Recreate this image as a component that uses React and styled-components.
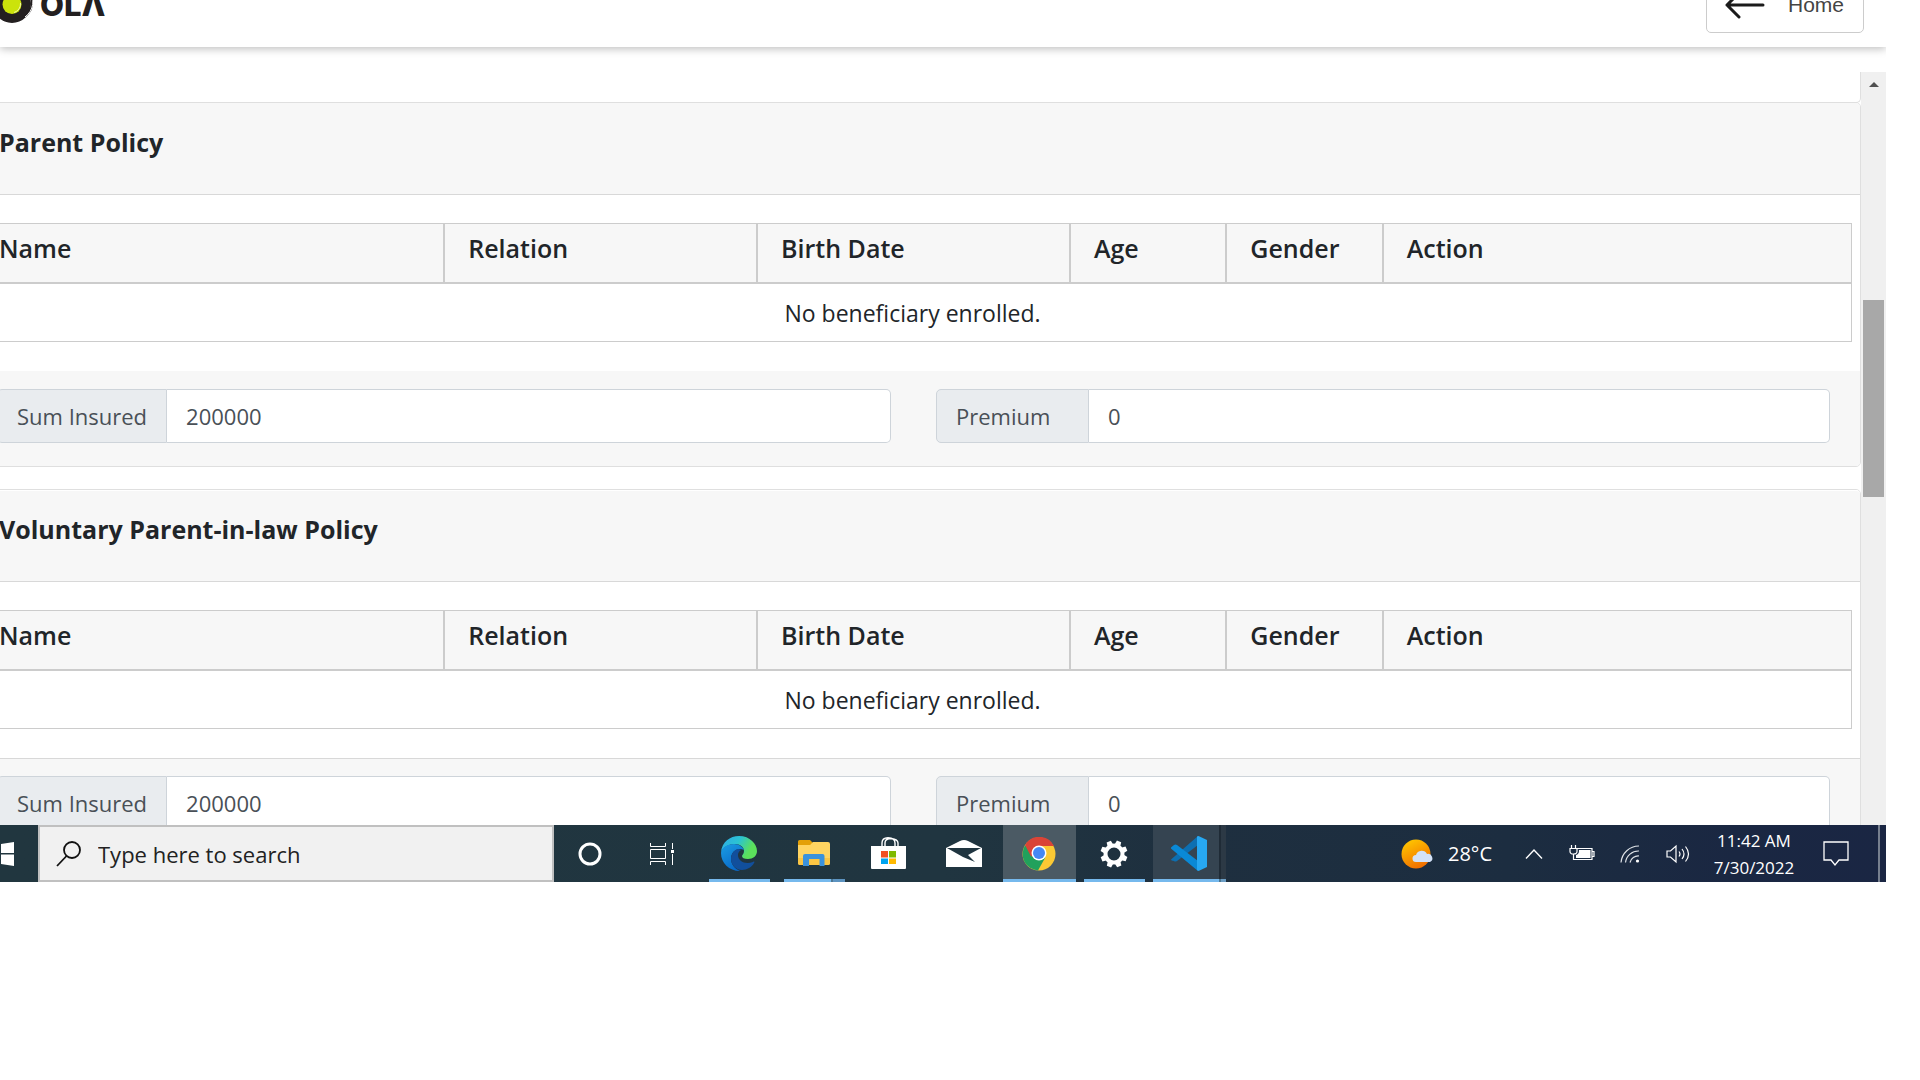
import React from "react";
import styled, { createGlobalStyle, css } from "styled-components";

const GlobalStyle = createGlobalStyle`
  *, *::before, *::after { box-sizing: border-box; }
  body {
    margin: 0;
    background: #fff;
    color: #212529;
    font-family: "Open Sans", "Noto Sans", sans-serif;
    font-size: 22px;
    line-height: 36px;
  }
  button, input { font: inherit; color: inherit; margin: 0; }
`;

const Screen = styled.div`
  display: flex;
  flex-direction: column;
  height: calc(100vh - 198px);
  margin-right: 34px;
  overflow: hidden;
`;

const Header = styled.header`
  display: flex;
  flex: none;
  justify-content: space-between;
  align-items: flex-end;
  height: 47px;
  padding-right: 22px;
  background: #fff;
  box-shadow: 0 2px 8px rgba(0, 0, 0, 0.25);
`;

const Brand = styled.a`
  display: flex;
  align-items: flex-end;
  gap: 6px;
  height: 63px;
  padding-bottom: 23px;
  color: #231f20;
  text-decoration: none;
`;

const BrandName = styled.span`
  font-family: Inter, sans-serif;
  font-size: 31px;
  font-weight: 800;
  line-height: 38px;
`;

const HomeButton = styled.button`
  display: flex;
  flex: none;
  align-items: center;
  gap: 23px;
  height: 56px;
  margin-bottom: 14px;
  padding: 0 19px 0 18px;
  border: 1px solid #ccc;
  border-radius: 5px;
  background: #fff;
  color: #444;
  font-family: "Liberation Sans", Arial, sans-serif;
  font-size: 21px;
`;

const Viewport = styled.div`
  display: flex;
  flex: 1;
  min-height: 0;
  margin-top: 25px;
  overflow: hidden;
`;

const Content = styled.main`
  flex: 1;
  min-width: 0;
  margin-left: -35px;
`;

const Card = styled.section`
  margin-bottom: 22px;
  border: 1px solid #dfdfdf;
  border-radius: 5px;
`;

const PreviousCard = styled.div`
  height: 31px;
  margin-bottom: -1px;
  border: 1px solid #dfdfdf;
  border-top: 0;
  border-radius: 0 0 5px 5px;
`;

const CardHeader = styled.div`
  height: 92px;
  padding: ${(p) => (p.$divided ? "19px" : "20px")} 33px 20px;
  border-top: ${(p) => (p.$divided ? "1px solid #fff" : "0")};
  border-bottom: 1px solid #d8d8d8;
  border-radius: 4px 4px 0 0;
  background: #f7f7f7;
`;

const Title = styled.h2`
  margin: 0;
  font-size: 25px;
  font-weight: 700;
  line-height: 38px;
`;

const CardBody = styled.div`
  padding: 28px 8px 29px;
`;

const Table = styled.table`
  width: 100%;
  table-layout: fixed;
  border-spacing: 0;
  border-right: 1px solid #ccc;
`;

const Th = styled.th`
  width: ${(p) => p.$share}%;
  height: 61px;
  padding: 6px 23px 16px;
  border: solid #ccc;
  border-width: 1px 0 2px 2px;
  background: #f7f7f7;
  font-size: 25px;
  font-weight: 600;
  text-align: left;
  vertical-align: top;
`;

const Td = styled.td`
  height: 58px;
  padding: 10px 23px;
  border-bottom: 1px solid #ccc;
  font-size: 23px;
  text-align: center;
`;

const CardFooter = styled.div`
  display: grid;
  grid-template-columns: 1fr 1fr;
  gap: 45px;
  padding: 17px 30px 23px 31px;
  border-top: 1px solid ${(p) => (p.$divided ? "#d8d8d8" : "#f7f7f7")};
  border-radius: 0 0 4px 4px;
  background: #f7f7f7;
  color: #495057;
`;

const Field = styled.div`
  display: flex;
  height: 54px;
`;

const FieldLabel = styled.label`
  flex: none;
  min-width: 153px;
  padding: 8px 19px;
  border: 1px solid #ced4da;
  border-radius: 5px 0 0 5px;
  background: #e9ecef;
`;

const FieldInput = styled.input`
  flex: 1;
  min-width: 0;
  padding: 0 19px;
  border: 1px solid #ced4da;
  border-left: 0;
  border-radius: 0 5px 5px 0;
  background: #fff;
  outline: none;
`;

const ScrollTrack = styled.div`
  display: flex;
  flex: none;
  flex-direction: column;
  align-items: center;
  width: 25px;
  background: #f0f0f0;
`;

const ScrollArrow = styled.svg`
  width: 10px;
  height: 5px;
  margin: 10px 0 213px;
`;

const ScrollThumb = styled.div`
  width: 21px;
  height: 197px;
  background: #a8a8a8;
`;

const Taskbar = styled.footer`
  display: flex;
  flex: none;
  height: 57px;
  background: linear-gradient(90deg, #21363f 0%, #203540 50%, #1e2f3f 64%, #1c2d40 80%, #1a2742 92%, #1a2643 100%);
  color: #fff;
`;

const taskButton = css`
  display: flex;
  flex: none;
  align-items: center;
  justify-content: center;
  padding: 0;
  border: 0;
  background: none;
`;

const StartButton = styled.button`
  ${taskButton}
  justify-content: flex-start;
  width: 38px;
`;

const Search = styled.label`
  display: flex;
  flex: none;
  align-items: center;
  gap: 17px;
  width: 516px;
  padding: 0 16px;
  border: 2px solid #c0c0c0;
  background: #f1f1f1;
  color: #222;
`;

const SearchInput = styled.input`
  flex: 1;
  min-width: 0;
  padding: 0;
  border: 0;
  background: none;
  outline: none;
  font-size: 22px;
  &::placeholder { color: #222; opacity: 1; }
`;

const ShellButtons = styled.div`
  display: flex;
  margin-right: 4px;
`;

const ShellButton = styled.button`
  ${taskButton}
  width: 72px;
`;

const AppButton = styled.button`
  ${taskButton}
  width: 73px;
  margin: 0 1px;
  padding-right: 1px;
  background:
    ${(p) => p.$line || "linear-gradient(transparent, transparent)"} bottom / 100% 3px no-repeat,
    ${(p) => p.$tint || "none"};
`;

const Tray = styled.div`
  display: flex;
  margin-left: auto;
`;

const Weather = styled.button`
  ${taskButton}
  gap: 14px;
  margin-right: 18px;
  font-size: 20px;
`;

const TrayButton = styled.button`
  ${taskButton}
  width: 48px;
`;

const Clock = styled.button`
  ${taskButton}
  flex-direction: column;
  width: 92px;
  margin-left: 6px;
  font-size: 17px;
  line-height: 27px;
`;

const Notifications = styled.button`
  ${taskButton}
  width: 72px;
`;

const ShowDesktop = styled.button`
  width: 8px;
  margin-left: 6px;
  padding: 0;
  border: 0;
  border-left: 2px solid #77808f;
  background: none;
`;

const columns = [
  ["Name", 25],
  ["Relation", 16.667],
  ["Birth Date", 16.667],
  ["Age", 8.333],
  ["Gender", 8.333],
  ["Action", 25],
];

const inset = "linear-gradient(90deg, transparent 6px, #76b9ed 6px, #76b9ed 67px, transparent 67px)";
const insetStack =
  "linear-gradient(90deg, transparent 6px, #76b9ed 6px, #76b9ed 53px, #4c7793 53px, #4c7793 55px, #5c93c0 55px, #5c93c0 67px, transparent 67px)";
const full = "linear-gradient(#76b9ed, #76b9ed)";
const fullStack =
  "linear-gradient(90deg, #76b9ed 66px, #4c7793 66px, #4c7793 68px, #6b9dc4 68px)";

function Policy({ id, title, divided }) {
  return (
    <Card>
      <CardHeader $divided={divided}>
        <Title>{title}</Title>
      </CardHeader>
      <CardBody>
        <Table>
          <thead>
            <tr>
              {columns.map(([name, share]) => (
                <Th key={name} $share={share}>{name}</Th>
              ))}
            </tr>
          </thead>
          <tbody>
            <tr>
              <Td colSpan={columns.length}>No beneficiary enrolled.</Td>
            </tr>
          </tbody>
        </Table>
      </CardBody>
      <CardFooter $divided={divided}>
        <Field>
          <FieldLabel htmlFor={`${id}-sum`}>Sum Insured</FieldLabel>
          <FieldInput id={`${id}-sum`} defaultValue="200000" />
        </Field>
        <Field>
          <FieldLabel htmlFor={`${id}-premium`}>Premium</FieldLabel>
          <FieldInput id={`${id}-premium`} defaultValue="0" />
        </Field>
      </CardFooter>
    </Card>
  );
}

const BrandMark = () => (
  <svg width="34" height="40" viewBox="0 -16 34 40">
    <circle cx="16" cy="3" r="16" fill="#fff" stroke="#231f20" strokeWidth="2" />
    <circle cx="12" cy="4" r="19" fill="#231f20" />
    <path d="M29 -10 A19 19 0 0 1 25 17" fill="none" stroke="#fff" strokeWidth="1" />
    <circle cx="12" cy="4.5" r="9.5" fill="#cbe30b" />
    <path d="M20.5 3 A9 9 0 0 1 14 12.500" fill="none" stroke="#f1f7a8" strokeWidth="1" />
  </svg>
);

const BackArrow = () => (
  <svg width="40" height="30" viewBox="0 0 40 30" fill="none" stroke="#1b1b1b" strokeWidth="3" strokeLinecap="round" strokeLinejoin="round">
    <path d="M38 15H2M14 3 2 15l12 12" />
  </svg>
);

const WindowsIcon = () => (
  <svg width="15" height="24" viewBox="0 0 15 24" fill="#fff">
    <path d="M1 2 14 0v11H1zM1 12.500h13V24L1 22z" />
  </svg>
);

const SearchIcon = () => (
  <svg width="25" height="26" viewBox="0 0 25 26" fill="none" stroke="#111" strokeWidth="1.800">
    <circle cx="16" cy="9" r="8" />
    <path d="M10.500 15 1 25" />
  </svg>
);

const CortanaIcon = () => (
  <svg width="24" height="24" viewBox="0 0 24 24" fill="none" stroke="#fff" strokeWidth="3">
    <circle cx="12" cy="12" r="10" />
  </svg>
);

const TaskViewIcon = () => (
  <svg width="26" height="24" viewBox="0 0 26 24" fill="none" stroke="#fff" strokeWidth="1">
    <path d="M1.500 1v3.500h15V1M1.500 7.500h15v9h-15zM1.500 23v-3.500h15V23M23.500 1v6M23.500 12v11" />
    <path d="M22 8h3v3h-3z" fill="#fff" stroke="none" />
  </svg>
);

const EdgeIcon = () => (
  <svg width="36" height="35" viewBox="0 0 36 35">
    <defs>
      <linearGradient id="edgeTop" x1="0" y1="0" x2="1" y2="0.400">
        <stop offset="0" stopColor="#2fa9e8" />
        <stop offset="0.500" stopColor="#2bc3d2" />
        <stop offset="0.900" stopColor="#5be05c" />
      </linearGradient>
      <linearGradient id="edgeLeft" x1="0" y1="0" x2="0.600" y2="1">
        <stop offset="0" stopColor="#1b9de2" />
        <stop offset="1" stopColor="#0868c9" />
      </linearGradient>
    </defs>
    <path d="M0 16C1 6 9 0 18 0c11 0 18 8 18 15 0 5-4 8-9 8-4 0-6-1-6-3 0-1 2-2 2-5 0-4-4-7-9-7C8 8 2 11 0 16z" fill="url(#edgeTop)" />
    <path d="M0 17C0 12 6 8 13 8c5 0 9 3 10 6-7-3-13 2-13 9 0 5 4 10 9 12C8 35 0 27 0 17z" fill="url(#edgeLeft)" />
    <path d="M17 13c-4 1-7 5-7 10 0 6 5 11 11 11 5 0 10-3 12-7 1-1 0-2-1-1-8 3-15-1-15-7 0-2 1-4 3-5-1-1-2-1-3-1z" fill="#114f9c" />
  </svg>
);

const FolderIcon = () => (
  <svg width="33" height="27" viewBox="0 0 33 27">
    <path d="M0 1.500Q0 0 1.500 0H12l3 3h10v5H0z" fill="#e3a008" />
    <path d="M0 5h12l3-3h15q2 0 2 2v19q0 2-2 2H2q-2 0-2-2z" fill="#ffd461" />
    <path d="M0 18h32v5q0 2-2 2H2q-2 0-2-2z" fill="#fbc543" />
    <path d="M5 26V16q0-2 2-2h17.500q2 0 2 2v10h-5v-7H11v7z" fill="#3b92dc" />
  </svg>
);

const StoreIcon = () => (
  <svg width="36" height="33" viewBox="0 0 36 33">
    <path d="M11 9V6q0-5 6-5.200Q24 1 24 6v3M14 9V6q0-4 5-4.500Q27 2 27 6v3" fill="none" stroke="#fff" strokeWidth="1.400" />
    <path d="M0 9h35v22q0 1-1 1H1q-1 0-1-1z" fill="#fff" />
    <path d="M10 14h7v6.500h-7z" fill="#f25022" />
    <path d="M18 14h7v6.500h-7z" fill="#7fba00" />
    <path d="M10 21.500h7V27h-7z" fill="#00a4ef" />
    <path d="M18 21.500h7V27h-7z" fill="#ffb900" />
  </svg>
);

const MailIcon = () => (
  <svg width="36" height="27" viewBox="0 0 36 27">
    <path d="M0 8 14 1q4-2 8 0l14 7v19H0z" fill="#fff" />
    <path d="M1 8h34L22 15l7 7-12-5z" fill="#203540" />
  </svg>
);

const ChromeIcon = () => (
  <svg width="34" height="34" viewBox="0 0 34 34">
    <circle cx="17" cy="17" r="16.500" fill="#fbc934" />
    <path d="M17 17 3 8.500A16.500 16.500 0 0 0 16 33.500L23 21z" fill="#21a15c" />
    <path d="M17 17 9 19.500 3 8A16.500 16.500 0 0 1 32 9H17z" fill="#da4437" />
    <circle cx="17" cy="16" r="7.500" fill="#fff" />
    <circle cx="17" cy="16" r="6" fill="#4688f4" />
  </svg>
);

const GearIcon = () => (
  <svg width="28" height="28" viewBox="-14 -14 28 28">
    <circle r="8.500" fill="none" stroke="#fff" strokeWidth="4" />
    {[22, 67, 112, 157, 202, 247, 292, 337].map((a) => (
      <path key={a} d="M-3 -9 -2.300 -13.500H2.300L3 -9z" fill="#fff" transform={`rotate(${a})`} />
    ))}
  </svg>
);

const CodeIcon = () => (
  <svg width="36" height="35" viewBox="0 0 36 35">
    <path d="M0 23.500 27 0v9L6 25q-2 1-3 0L.6 24.500z" fill="#0d6fb1" />
    <path d="M0 11.500 3 9q1.500-1 3 0l21 16v10L.5 13q-1-.800-.5-1.500z" fill="#0a89d6" />
    <path d="M26 .5 27.500 0 36 4v27l-8.500 4-1.500-1z" fill="#27a8f2" />
  </svg>
);

const WeatherIcon = () => (
  <svg width="33" height="30" viewBox="0 0 33 30">
    <defs>
      <linearGradient id="sun" x1="0.200" y1="0" x2="0.700" y2="1">
        <stop offset="0" stopColor="#ffc800" />
        <stop offset="1" stopColor="#f06a00" />
      </linearGradient>
    </defs>
    <circle cx="15" cy="15" r="14.500" fill="url(#sun)" />
    <path d="M15 23a3.500 3.500 0 0 1 0-7 6 6 0 0 1 11-1A4.300 4.300 0 0 1 29 23z" fill="#d3e2f8" />
  </svg>
);

const ChevronIcon = () => (
  <svg width="18" height="12" viewBox="0 0 18 12" fill="none" stroke="#fff" strokeWidth="1.400">
    <path d="M1 10.500 9 2l8 8.500" />
  </svg>
);

const BatteryIcon = () => (
  <svg width="26" height="20" viewBox="0 0 26 20" fill="none" stroke="#fff" strokeWidth="1.200">
    <path d="M8 4.500h15v11H5M23 7.500h2v5h-2M2.500 1v3M6.500 1v3M1 4.500h7v3q0 2.500-3.500 2.500T1 7.500zM4.500 10v6" />
    <path d="M10 6h11.500v8H7v-3q3-1 3-4z" fill="#fff" stroke="none" />
  </svg>
);

const WifiIcon = () => (
  <svg width="20" height="18" viewBox="0 0 20 18" fill="none" stroke="#dfe3e8" strokeWidth="1.200">
    <path d="M1 17.500A18 18 0 0 1 19 1M5.500 17.500A13 13 0 0 1 19 6M10 17.500A8.500 8.500 0 0 1 19 11" />
    <circle cx="17.500" cy="16" r="1.600" fill="#fff" stroke="none" />
  </svg>
);

const SpeakerIcon = () => (
  <svg width="24" height="20" viewBox="0 0 24 20" fill="none" stroke="#fff" strokeWidth="1.200">
    <path d="M1 7h3.500L10 2v16l-5.500-5H1z" />
    <path d="M13 7.500q2 2.500 0 5M16 5q4 5 0 10M19.500 2.500q6 7.500 0 15" />
  </svg>
);

const NoteIcon = () => (
  <svg width="26" height="26" viewBox="0 0 26 26" fill="none" stroke="#fff" strokeWidth="1.300">
    <path d="M1 1h24v18h-9l-4 5-4-5H1z" />
  </svg>
);

export default function App() {
  return (
    <>
      <GlobalStyle />
      <Screen>
        <Header>
          <Brand href="#">
            <BrandMark />
            <BrandName>OLΛ</BrandName>
          </Brand>
          <HomeButton>
            <BackArrow />
            Home
          </HomeButton>
        </Header>
        <Viewport>
          <Content>
            <PreviousCard />
            <Policy id="parent" title="Parent Policy" />
            <Policy id="in-law" title="Voluntary Parent-in-law Policy" divided />
          </Content>
          <ScrollTrack>
            <ScrollArrow viewBox="0 0 10 5">
              <path d="M5 0 10 5H0z" fill="#505050" />
            </ScrollArrow>
            <ScrollThumb />
          </ScrollTrack>
        </Viewport>
        <Taskbar>
          <StartButton aria-label="Start"><WindowsIcon /></StartButton>
          <Search>
            <SearchIcon />
            <SearchInput placeholder="Type here to search" />
          </Search>
          <ShellButtons>
            <ShellButton aria-label="Cortana"><CortanaIcon /></ShellButton>
            <ShellButton aria-label="Task view"><TaskViewIcon /></ShellButton>
          </ShellButtons>
          <AppButton aria-label="Edge" $line={inset}><EdgeIcon /></AppButton>
          <AppButton aria-label="File Explorer" $line={insetStack}><FolderIcon /></AppButton>
          <AppButton aria-label="Store"><StoreIcon /></AppButton>
          <AppButton aria-label="Mail"><MailIcon /></AppButton>
          <AppButton
            aria-label="Chrome"
            $tint="linear-gradient(#4b5a64, #4b5a64)"
            $line={full}
          >
            <ChromeIcon />
          </AppButton>
          <AppButton aria-label="Settings" $line={inset}><GearIcon /></AppButton>
          <AppButton
            aria-label="Code"
            $tint="linear-gradient(90deg, #354451 66px, #1f2b36 66px, #1f2b36 68px, #2c3945 68px)"
            $line={fullStack}
          >
            <CodeIcon />
          </AppButton>
          <Tray>
            <Weather><WeatherIcon />28°C</Weather>
            <TrayButton aria-label="Hidden icons"><ChevronIcon /></TrayButton>
            <TrayButton aria-label="Battery"><BatteryIcon /></TrayButton>
            <TrayButton aria-label="Network"><WifiIcon /></TrayButton>
            <TrayButton aria-label="Volume"><SpeakerIcon /></TrayButton>
            <Clock>
              <span>11:42 AM</span>
              <span>7/30/2022</span>
            </Clock>
            <Notifications aria-label="Notifications"><NoteIcon /></Notifications>
            <ShowDesktop aria-label="Show desktop" />
          </Tray>
        </Taskbar>
      </Screen>
    </>
  );
}
